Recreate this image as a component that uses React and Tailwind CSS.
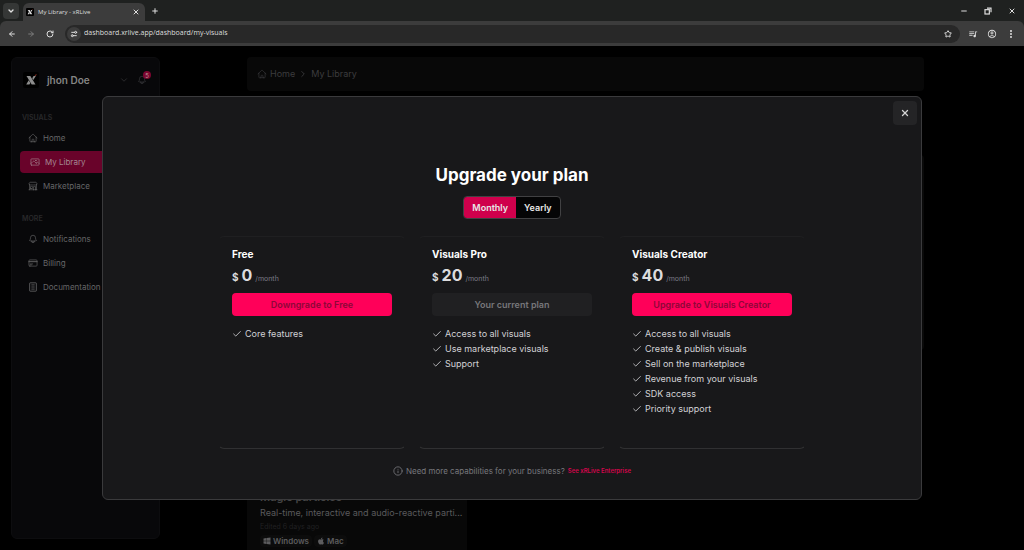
import { useState } from 'react'
import {
  ArrowLeft, ArrowRight, RotateCw, ChevronDown, ChevronRight, Plus, X, Star,
  EllipsisVertical, Minus, Check, Info, Settings2,
} from 'lucide-react'
import { FaWindows, FaApple } from 'react-icons/fa'
import { MdQueueMusic, MdOutlineAccountCircle } from 'react-icons/md'
import {
  HiOutlineHome, HiOutlinePhoto, HiOutlineBuildingStorefront, HiOutlineBell, HiOutlineCreditCard,
} from 'react-icons/hi2'

const PLANS = [
  { name: 'Free', price: 0, action: 'Downgrade to Free', features: ['Core features'] },
  {
    name: 'Visuals Pro',
    price: 20,
    action: 'Your current plan',
    current: true,
    features: ['Access to all visuals', 'Use marketplace visuals', 'Support'],
  },
  {
    name: 'Visuals Creator',
    price: 40,
    action: 'Upgrade to Visuals Creator',
    features: [
      'Access to all visuals',
      'Create & publish visuals',
      'Sell on the marketplace',
      'Revenue from your visuals',
      'SDK access',
      'Priority support',
    ],
  },
]

const NAV = [
  {
    title: 'VISUALS',
    items: [
      { label: 'Home', icon: HiOutlineHome },
      { label: 'My Library', icon: HiOutlinePhoto, active: true },
      { label: 'Marketplace', icon: HiOutlineBuildingStorefront },
    ],
  },
  {
    title: 'MORE',
    items: [
      { label: 'Notifications', icon: HiOutlineBell },
      { label: 'Billing', icon: HiOutlineCreditCard },
      { label: 'Documentation', icon: DocumentIcon },
    ],
  },
]

function DocumentIcon({ className }) {
  return (
    <svg viewBox="0 0 24 24" fill="none" stroke="currentColor" strokeWidth="2" className={className}>
      <rect x="4" y="2" width="16" height="20" rx="1" />
      <path d="M8 7h8M8 12h8M8 17h8" />
    </svg>
  )
}

function RestoreIcon({ className }) {
  return (
    <svg viewBox="0 0 12 12" fill="none" stroke="currentColor" strokeWidth="1.8" className={className}>
      <rect x="1.500" y="4" width="6.500" height="6.500" />
      <path d="M4.500 1.800h6v6" />
    </svg>
  )
}

function Logo({ className }) {
  return (
    <svg viewBox="0 0 16 16" className={className}>
      <rect width="16" height="16" rx="2" fill="#000" />
      <path d="M3.500 4h3.800l5.200 8.500H8.700z" fill="currentColor" />
      <path d="M9.200 6.200 10.600 4h2.200l-2.500 4zM5.700 8.200l1.700 2.700-1 1.600H3.200z" fill="currentColor" />
      <path d="M11.400 3.400 13.600 2 13 3.700z" fill="#b3402e" />
    </svg>
  )
}

function BrowserChrome() {
  return (
    <header className="bg-[#1f2120] font-['Open_Sans',sans-serif] text-[#dedede]">
      <div className="flex h-[21px] items-center">
        <button aria-label="Search tabs" className="ml-[3px] flex h-4 w-4 items-center justify-center rounded bg-[#353736]">
          <ChevronDown className="h-2 w-2" strokeWidth={4} />
        </button>
        <div className="ml-1 flex h-full w-[122px] items-end">
          <div className="flex h-[18px] w-full items-center rounded-t-md bg-[#3c3c3c] px-[3px]">
            <Logo className="h-2 w-2" />
            <span className="ml-1 flex-1 text-[6px]">My Library - xRLive</span>
            <button aria-label="Close tab" className="mr-0.5"><X className="h-2 w-2" strokeWidth={3} /></button>
          </div>
        </div>
        <button aria-label="New tab" className="ml-1.5"><Plus className="h-2 w-2" strokeWidth={3} /></button>
        <div className="ml-auto mr-2 flex items-center gap-4">
          <button aria-label="Minimize"><Minus className="h-2 w-2" strokeWidth={3} /></button>
          <button aria-label="Restore"><RestoreIcon className="h-2 w-2" /></button>
          <button aria-label="Close window"><X className="h-2 w-2" strokeWidth={3} /></button>
        </div>
      </div>
      <div className="flex h-[25px] items-center rounded-t-md bg-[#3c3c3c] px-2">
        <div className="flex items-center gap-[11px]">
          <button aria-label="Back"><ArrowLeft className="h-2 w-2" strokeWidth={3} /></button>
          <button aria-label="Forward" className="text-[#7c7c7c]"><ArrowRight className="h-2 w-2" strokeWidth={3} /></button>
          <button aria-label="Reload"><RotateCw className="h-2 w-2" strokeWidth={3} /></button>
        </div>
        <div className="ml-[11px] flex h-[18px] flex-1 items-center rounded-full bg-[#282828] pl-0.5 pr-2">
          <button aria-label="Site information" className="flex h-3.5 w-3.5 items-center justify-center rounded-full bg-[#3c3c3c]">
            <Settings2 className="h-2 w-2 -scale-y-100" strokeWidth={3} />
          </button>
          <input
            aria-label="Address"
            defaultValue="dashboard.xrlive.app/dashboard/my-visuals"
            className="ml-[3px] flex-1 bg-transparent text-[7px] outline-none"
          />
          <button aria-label="Bookmark"><Star className="h-2 w-2" strokeWidth={3} /></button>
        </div>
        <div className="ml-2 flex items-center gap-[9px]">
          <button aria-label="Media"><MdQueueMusic className="h-2.5 w-2.5" /></button>
          <button aria-label="Profile"><MdOutlineAccountCircle className="h-2.5 w-2.5" /></button>
          <button aria-label="Menu"><EllipsisVertical className="h-2.5 w-2.5" strokeWidth={3} /></button>
        </div>
      </div>
    </header>
  )
}

function Sidebar() {
  return (
    <aside className="w-[149px] shrink-0 rounded-md border border-[#0d0d0f] bg-[#08080a] px-2 pt-3">
      <div className="flex h-5 items-center pl-[3px] pr-1">
        <Logo className="h-4 w-4 text-[#8d8d8d]" />
        <span className="ml-2 text-[10px] font-semibold text-[#858585]">jhon Doe</span>
        <ChevronDown className="ml-auto h-2.5 w-2.5 text-[#303032]" />
        <span className="relative ml-2">
          <HiOutlineBell className="h-2.5 w-2.5 text-[#3c3c3e]" />
          <span className="absolute -right-1 -top-1 flex h-2 w-2 items-center justify-center rounded-full bg-[#7d0630] text-[6px] text-[#b99]">5</span>
        </span>
      </div>
      <nav className="pt-[22px]">
        {NAV.map((group) => (
          <div key={group.title} className="mb-4">
            <p className="mb-[3px] px-0.5 text-[7px] leading-3 font-semibold text-[#29292b]">{group.title}</p>
            <ul className="flex flex-col gap-0.5">
              {group.items.map(({ label, icon: Icon, active }) => (
                <li key={label}>
                  <a
                    href="#"
                    className={`flex h-[22px] items-center gap-[5px] rounded text-[8px] ${active ? 'bg-[#69032a] px-2.5 text-[#a58892]' : 'px-2 text-[#666668]'}`}
                  >
                    <Icon className="h-2.5 w-2.5" />
                    {label}
                  </a>
                </li>
              ))}
            </ul>
          </div>
        ))}
      </nav>
    </aside>
  )
}

function Library() {
  return (
    <main className="ml-[87px] mr-[100px] flex flex-1 flex-col">
      <div className="flex h-[34px] shrink-0 items-center gap-[3px] rounded bg-[#080808] px-2.5 text-[9px] text-[#3c3c3e]">
        <HiOutlineHome className="h-2.5 w-2.5" />
        <a href="#">Home</a>
        <ChevronRight className="h-2.5 w-2.5" />
        <a href="#">My Library</a>
      </div>
      <div className="mt-16 h-[195px] rounded bg-[#0a0a0a]" />
      <article className="mt-auto w-[220px] rounded-t bg-[#080808] pb-[3px] pl-[13px]">
        <h3 className="text-[11px] leading-4 font-semibold text-[#444]">Magic particles</h3>
        <p className="text-[9px] leading-4 whitespace-nowrap text-[#5a5a5c]">Real-time, interactive and audio-reactive parti...</p>
        <p className="text-[7px] leading-3 text-[#202022]">Edited 6 days ago</p>
        <div className="mt-0.5 flex gap-0.5 text-[8px] leading-3 font-semibold text-[#5c5c5e]">
          <span className="flex items-center gap-0.5 rounded bg-[#0c0c0c] px-[3px]"><FaWindows className="h-2 w-2" />Windows</span>
          <span className="flex items-center gap-0.5 rounded bg-[#0c0c0c] px-[3px]"><FaApple className="h-2 w-2" />Mac</span>
        </div>
      </article>
    </main>
  )
}

function PlanCard({ plan, yearly }) {
  return (
    <section className="flex min-h-[213px] w-[188px] flex-col rounded-md border border-x-transparent border-t-[#1f1f21] border-b-[#303032] px-[13px] pt-[9px]">
      <h3 className="text-[10px] leading-4 font-bold text-white">{plan.name}</h3>
      <p className="mt-[3px] flex h-5 items-baseline gap-[3px] font-bold text-[#dcdcde]">
        <span className="text-[10px]">$</span>
        <span className="text-base leading-5">{yearly ? plan.price * 10 : plan.price}</span>
        <span className="text-[7px] font-normal text-[#7b7b86]">{yearly ? '/year' : '/month'}</span>
      </p>
      <button
        disabled={plan.current}
        className={`mt-2 h-[23px] rounded text-[9px] font-semibold ${plan.current ? 'bg-[#202022] text-[#77777a]' : 'bg-[#ff0059] text-[#8e0738]'}`}
      >
        {plan.action}
      </button>
      <ul className="mt-2.5">
        {plan.features.map((f) => (
          <li key={f} className="flex h-[15px] items-center gap-[3px] text-[9px] text-[#d2d2d6]">
            <Check className="h-2.5 w-2.5" strokeWidth={2} />
            {f}
          </li>
        ))}
      </ul>
    </section>
  )
}

function UpgradeDialog() {
  const [yearly, setYearly] = useState(false)

  return (
    <div className="absolute inset-0 flex items-center justify-center">
      <div
        role="dialog"
        aria-labelledby="upgrade-title"
        className="relative flex h-4/5 w-4/5 flex-col items-center rounded-md border border-[#3a3a3c] bg-[#18181a] pt-[66px]"
      >
        <button aria-label="Close" className="absolute right-1 top-1 flex h-6 w-6 items-center justify-center rounded bg-[#242426] text-[#d4d4d4]">
          <X className="h-2.5 w-2.5" strokeWidth={3} />
        </button>
        <h2 id="upgrade-title" className="text-[17px] leading-6 font-bold text-white">Upgrade your plan</h2>
        <div className="mt-[9px] flex h-[23px] overflow-hidden rounded border border-[#414143] bg-[#050506] text-[9px] font-semibold text-[#e8e8e8]">
          <button onClick={() => setYearly(false)} className={`px-2 ${yearly ? '' : 'bg-[#cf004c]'}`}>Monthly</button>
          <button onClick={() => setYearly(true)} className={`px-2 ${yearly ? 'bg-[#cf004c]' : ''}`}>Yearly</button>
        </div>
        <div className="mt-[17px] flex gap-3">
          {PLANS.map((plan) => (
            <PlanCard key={plan.name} plan={plan} yearly={yearly} />
          ))}
        </div>
        <p className="mt-4 flex items-center gap-[3px] text-[8px] leading-3 text-[#77777c]">
          <Info className="h-2.5 w-2.5" />
          Need more capabilities for your business?
          <a href="#" className="text-[6px] font-semibold text-[#d4054b]">See xRLive Enterprise</a>
        </p>
      </div>
    </div>
  )
}

export default function App() {
  return (
    <div className="flex h-screen flex-col bg-black font-[Inter,sans-serif]">
      <BrowserChrome />
      <div className="relative flex min-h-0 flex-1 overflow-hidden">
        <div className="flex flex-1 pl-[11px] pt-[11px]">
          <div className="flex shrink-0 pb-[11px]">
            <Sidebar />
          </div>
          <Library />
        </div>
        <UpgradeDialog />
      </div>
    </div>
  )
}
